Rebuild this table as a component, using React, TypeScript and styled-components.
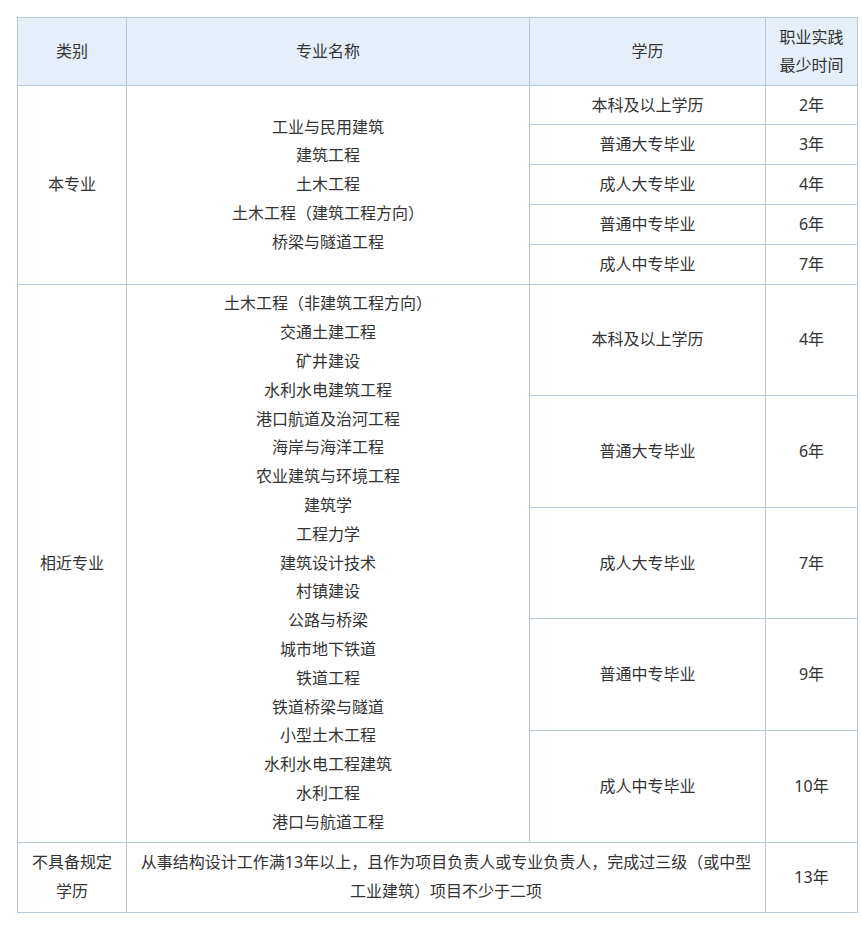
import React from "react";
import styled, { createGlobalStyle } from "styled-components";

const GlobalStyle = createGlobalStyle`
  html, body {
    margin: 0;
    padding: 0;
    background: #ffffff;
  }
  body {
    font-family: "Noto Sans", "Noto Sans CJK SC", sans-serif;
    color: #333333;
  }
`;

const Page = styled.div`
  padding: 17px 5px 17px 17px;
`;

const Table = styled.table`
  width: 840px;
  border-collapse: collapse;
  table-layout: fixed;
  font-size: 16px;
  line-height: 28.8px;
`;

const HeadCell = styled.th`
  background: #e6eefa;
  border: 1px solid #b7cad8;
  padding: 4.5px 8px;
  font-weight: normal;
  text-align: center;
  vertical-align: middle;
`;

const Cell = styled.td`
  border: 1px solid #b7cad8;
  padding: 4.5px 8px;
  text-align: center;
  vertical-align: middle;
`;

const Row = styled.tr<{ $h?: number }>`
  height: ${(p) => (p.$h ? `${p.$h}px` : "auto")};
`;

const NameLine = styled.div`
  white-space: nowrap;
`;

type Group = {
  label: string;
  names: string[];
  levels: [string, string][];
  rowHeight?: number;
};

const groups: Group[] = [
  {
    label: "本专业",
    names: [
      "工业与民用建筑",
      "建筑工程",
      "土木工程",
      "土木工程（建筑工程方向）",
      "桥梁与隧道工程",
    ],
    levels: [
      ["本科及以上学历", "2年"],
      ["普通大专毕业", "3年"],
      ["成人大专毕业", "4年"],
      ["普通中专毕业", "6年"],
      ["成人中专毕业", "7年"],
    ],
    rowHeight: 39.8,
  },
  {
    label: "相近专业",
    names: [
      "土木工程（非建筑工程方向）",
      "交通土建工程",
      "矿井建设",
      "水利水电建筑工程",
      "港口航道及治河工程",
      "海岸与海洋工程",
      "农业建筑与环境工程",
      "建筑学",
      "工程力学",
      "建筑设计技术",
      "村镇建设",
      "公路与桥梁",
      "城市地下铁道",
      "铁道工程",
      "铁道桥梁与隧道",
      "小型土木工程",
      "水利水电工程建筑",
      "水利工程",
      "港口与航道工程",
    ],
    levels: [
      ["本科及以上学历", "4年"],
      ["普通大专毕业", "6年"],
      ["成人大专毕业", "7年"],
      ["普通中专毕业", "9年"],
      ["成人中专毕业", "10年"],
    ],
    rowHeight: 111.6,
  },
];

const App = () => {
  return (
    <Page>
      <GlobalStyle />
      <Table>
        <colgroup>
          <col style={{ width: 109 }} />
          <col style={{ width: 403 }} />
          <col style={{ width: 236 }} />
          <col style={{ width: 92 }} />
        </colgroup>
        <thead>
          <tr>
            <HeadCell>类别</HeadCell>
            <HeadCell>专业名称</HeadCell>
            <HeadCell>学历</HeadCell>
            <HeadCell>
              职业实践
              <br />
              最少时间
            </HeadCell>
          </tr>
        </thead>
        <tbody>
          {groups.map((g) =>
            g.levels.map(([level, years], i) => (
              <Row key={g.label + i} $h={g.rowHeight}>
                {i === 0 && (
                  <>
                    <Cell rowSpan={g.levels.length}>{g.label}</Cell>
                    <Cell rowSpan={g.levels.length}>
                      {g.names.map((n) => (
                        <NameLine key={n}>{n}</NameLine>
                      ))}
                    </Cell>
                  </>
                )}
                <Cell>{level}</Cell>
                <Cell>{years}</Cell>
              </Row>
            ))
          )}
          <Row $h={70}>
            <Cell>不具备规定学历</Cell>
            <Cell colSpan={2}>
              从事结构设计工作满13年以上，且作为项目负责人或专业负责人，完成过三级（或中型工业建筑）项目不少于二项
            </Cell>
            <Cell>13年</Cell>
          </Row>
        </tbody>
      </Table>
    </Page>
  );
};

export default App;
